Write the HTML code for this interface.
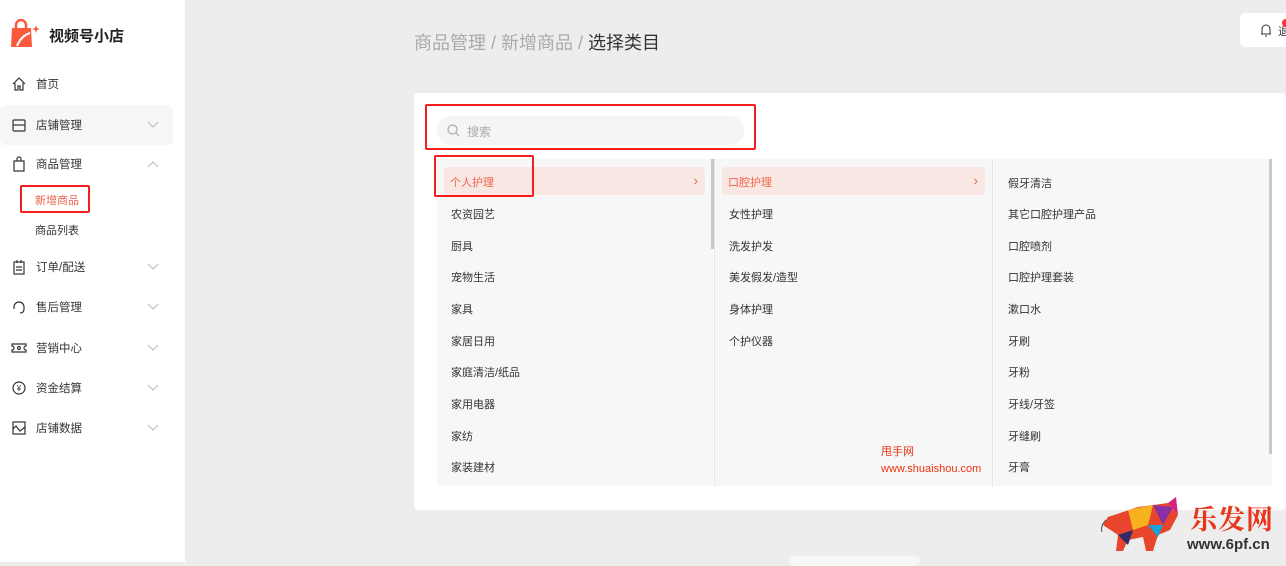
<!DOCTYPE html>
<html><head><meta charset="utf-8"><style>
*{margin:0;padding:0;box-sizing:border-box}
body{width:1286px;height:562px;overflow:hidden;background:#ededed;font-family:"Liberation Sans","Noto Sans CJK SC",sans-serif;font-size:12px;color:#333;position:relative}
.abs{position:absolute}
#side{left:0;top:0;width:185px;height:562px;background:#fff}
.mi{position:absolute;left:0;width:173px;height:40px;display:flex;align-items:center;font-size:11.5px;color:#333}
.mi svg.ic{position:absolute;left:11px}
.mi span{position:absolute;left:36px}
.mi svg.ch{position:absolute;left:147px}
.col{position:absolute;top:159px;height:327px;background:#f7f7f7}
.it{position:absolute;font-size:11px;color:#333}
.sel{position:absolute;height:28px;background:#f9e7e4;border-radius:3px;color:#f0644b}
.redbox{position:absolute;border:2px solid #f51d1d;border-radius:2px}
</style></head><body>
<div id="side" class="abs">
  <svg class="abs" style="left:9px;top:19px" width="30" height="30" viewBox="0 0 30 30"><path d="M3 9h19l1 19H2z" fill="#fa5a3c"/><path d="M7 9V6a5 5 0 0 1 10 0v3" fill="none" stroke="#fa5a3c" stroke-width="2.5"/><path d="M8 27q4-10 13-13" fill="none" stroke="#fff" stroke-width="2"/><path d="M27 6l1 3 3 1-3 1-1 3-1-3-3-1 3-1z" fill="#fa5a3c"/></svg>
  <div class="abs" style="left:49px;top:25px;font-size:15px;font-weight:bold;color:#222">视频号小店</div>
  <div class="mi" style="top:64px"><svg class="ic" width="16" height="16" viewBox="0 0 16 16" fill="none" stroke="#333" stroke-width="1.2"><path d="M2 8L8 2l6 6M4 7v7h3v-4h2v4h3V7"/></svg><span>首页</span></div>
  <div class="mi" style="top:105px;background:#f5f6f7;border-radius:6px"><svg class="ic" width="16" height="16" viewBox="0 0 16 16" fill="none" stroke="#333" stroke-width="1.2"><rect x="2" y="3" width="12" height="11" rx="1"/><path d="M2 8h12"/></svg><span>店铺管理</span><svg class="ch" width="12" height="8" viewBox="0 0 12 8" fill="none" stroke="#bbb"><path d="M1 1l5 5 5-5"/></svg></div>
  <div class="mi" style="top:144px"><svg class="ic" width="16" height="16" viewBox="0 0 16 16" fill="none" stroke="#333" stroke-width="1.2"><path d="M3 5h10v10H3zM6 5V3a2 2 0 0 1 4 0v2"/></svg><span>商品管理</span><svg class="ch" width="12" height="8" viewBox="0 0 12 8" fill="none" stroke="#bbb"><path d="M1 7l5-5 5 5"/></svg></div>
  <div class="abs" style="left:35px;top:192px;font-size:11px;color:#f0644b">新增商品</div>
  <div class="redbox" style="left:20px;top:185px;width:70px;height:28px"></div>
  <div class="abs" style="left:35px;top:222px;font-size:11px;color:#333">商品列表</div>
  <div class="mi" style="top:247px"><svg class="ic" width="16" height="16" viewBox="0 0 16 16" fill="none" stroke="#333" stroke-width="1.2"><rect x="3" y="3" width="10" height="12"/><path d="M6 1v3M10 1v3M5 8h6M5 11h6"/></svg><span>订单/配送</span><svg class="ch" width="12" height="8" viewBox="0 0 12 8" fill="none" stroke="#bbb"><path d="M1 1l5 5 5-5"/></svg></div>
  <div class="mi" style="top:287px"><svg class="ic" width="16" height="16" viewBox="0 0 16 16" fill="none" stroke="#333" stroke-width="1.2"><path d="M3 10V8a5 5 0 0 1 10 0v2M13 10q0 4-4 4"/></svg><span>售后管理</span><svg class="ch" width="12" height="8" viewBox="0 0 12 8" fill="none" stroke="#bbb"><path d="M1 1l5 5 5-5"/></svg></div>
  <div class="mi" style="top:328px"><svg class="ic" width="16" height="16" viewBox="0 0 16 16" fill="none" stroke="#333" stroke-width="1.2"><path d="M1 4h14v2a2 2 0 0 0 0 4v2H1v-2a2 2 0 0 0 0-4z"/><circle cx="8" cy="8" r="1.5"/></svg><span>营销中心</span><svg class="ch" width="12" height="8" viewBox="0 0 12 8" fill="none" stroke="#bbb"><path d="M1 1l5 5 5-5"/></svg></div>
  <div class="mi" style="top:368px"><svg class="ic" width="16" height="16" viewBox="0 0 16 16" fill="none" stroke="#333" stroke-width="1.2"><circle cx="8" cy="8" r="6"/><text x="8" y="11" font-size="8" text-anchor="middle" fill="#333" stroke="none">¥</text></svg><span>资金结算</span><svg class="ch" width="12" height="8" viewBox="0 0 12 8" fill="none" stroke="#bbb"><path d="M1 1l5 5 5-5"/></svg></div>
  <div class="mi" style="top:408px"><svg class="ic" width="16" height="16" viewBox="0 0 16 16" fill="none" stroke="#333" stroke-width="1.2"><rect x="2" y="2" width="12" height="12"/><path d="M2 9l3-3 4 5 5-4"/></svg><span>店铺数据</span><svg class="ch" width="12" height="8" viewBox="0 0 12 8" fill="none" stroke="#bbb"><path d="M1 1l5 5 5-5"/></svg></div>
</div>

<div class="abs" style="left:414px;top:29px;font-size:18px;color:#aaa">商品管理 / 新增商品 / <span style="color:#333">选择类目</span></div>
<div class="abs" style="left:1240px;top:13px;width:60px;height:34px;background:#fff;border-radius:6px"></div>
<svg class="abs" style="left:1260px;top:23px" width="12" height="14" viewBox="0 0 12 14" fill="none" stroke="#333"><path d="M2 11V6a4 4 0 0 1 8 0v5zM1 11h10M5 13h2"/></svg>
<div class="abs" style="left:1278px;top:23px;font-size:11px">退</div>
<div class="abs" style="left:1282px;top:19px;width:8px;height:8px;border-radius:50%;background:#f33"></div>

<div class="abs" style="left:414px;top:93px;width:872px;height:417px;background:#fff;border-radius:4px"></div>
<div class="abs" style="left:437px;top:116px;width:307px;height:29px;background:#f5f5f5;border-radius:15px"></div>
<svg class="abs" style="left:447px;top:124px" width="13" height="13" viewBox="0 0 13 13" fill="none" stroke="#aaa" stroke-width="1.2"><circle cx="5.5" cy="5.5" r="4.5"/><path d="M9 9l3 3"/></svg>
<div class="abs" style="left:467px;top:123px;font-size:12px;color:#aaa">搜索</div>
<div class="redbox" style="left:425px;top:104px;width:331px;height:46px"></div>

<div class="col" style="left:437px;width:276px"></div>
<div class="col" style="left:715px;width:277px"></div>
<div class="col" style="left:994px;width:278px;border-radius:0 0 4px 0"></div>
<div class="abs" style="left:711px;top:159px;width:3px;height:90px;background:#c8c8c8"></div>
<div class="abs" style="left:714px;top:159px;width:1px;height:327px;background:#e4e4e4"></div>
<div class="abs" style="left:992px;top:159px;width:1px;height:327px;background:#e4e4e4"></div>
<div class="abs" style="left:1269px;top:159px;width:3px;height:295px;background:#c8c8c8"></div>

<div class="sel" style="left:444px;top:167px;width:261px"><span class="abs" style="left:6px;top:7px;font-size:11px">个人护理</span><span class="abs" style="right:7px;top:6px;font-size:13px;line-height:15px">›</span></div>
<div class="redbox" style="left:434px;top:155px;width:100px;height:42px"></div>
<div class="sel" style="left:722px;top:167px;width:263px"><span class="abs" style="left:6px;top:7px;font-size:11px">口腔护理</span><span class="abs" style="right:7px;top:6px;font-size:13px;line-height:15px">›</span></div>

<div class="it" style="left:451px;top:206px">农资园艺</div>
<div class="it" style="left:451px;top:238px">厨具</div>
<div class="it" style="left:451px;top:269px">宠物生活</div>
<div class="it" style="left:451px;top:301px">家具</div>
<div class="it" style="left:451px;top:333px">家居日用</div>
<div class="it" style="left:451px;top:364px">家庭清洁/纸品</div>
<div class="it" style="left:451px;top:396px">家用电器</div>
<div class="it" style="left:451px;top:428px">家纺</div>
<div class="it" style="left:451px;top:459px">家装建材</div>

<div class="it" style="left:729px;top:206px">女性护理</div>
<div class="it" style="left:729px;top:238px">洗发护发</div>
<div class="it" style="left:729px;top:269px">美发假发/造型</div>
<div class="it" style="left:729px;top:301px">身体护理</div>
<div class="it" style="left:729px;top:333px">个护仪器</div>

<div class="it" style="left:1008px;top:175px">假牙清洁</div>
<div class="it" style="left:1008px;top:206px">其它口腔护理产品</div>
<div class="it" style="left:1008px;top:238px">口腔喷剂</div>
<div class="it" style="left:1008px;top:269px">口腔护理套装</div>
<div class="it" style="left:1008px;top:301px">漱口水</div>
<div class="it" style="left:1008px;top:333px">牙刷</div>
<div class="it" style="left:1008px;top:364px">牙粉</div>
<div class="it" style="left:1008px;top:396px">牙线/牙签</div>
<div class="it" style="left:1008px;top:428px">牙缝刷</div>
<div class="it" style="left:1008px;top:459px">牙膏</div>

<div class="abs" style="left:881px;top:444px;font-size:11px;color:#e31;line-height:17px">甩手网<br>www.shuaishou.com</div>

<div class="abs" style="left:789px;top:556px;width:131px;height:10px;background:#f7f7f7;border-radius:5px"></div>

<svg class="abs" style="left:1098px;top:495px" width="95" height="58" viewBox="0 0 95 58"><polygon points="10,22 40,12 70,8 80,20 72,35 60,40 55,56 48,56 45,42 30,45 25,56 18,56 20,40 5,30" fill="#e8452c"/><polygon points="30,15 55,10 50,30 35,35" fill="#f7b21f"/><polygon points="55,10 75,12 65,30" fill="#8b2fa5"/><polygon points="20,40 35,35 30,50" fill="#2e2a6b"/><polygon points="50,30 65,30 60,42" fill="#1ba3d8"/><polygon points="70,8 78,2 80,20" fill="#d4237a"/><path d="M8 25q-6 6-4 12" stroke="#555" fill="none"/></svg>
<div class="abs" style="left:1190px;top:498px;font-size:27px;font-weight:bold;color:#e8351c;font-family:'Noto Serif CJK SC',serif;letter-spacing:1px">乐发网</div>
<div class="abs" style="left:1187px;top:536px;font-size:15px;font-weight:bold;color:#333">www.6pf.cn</div>
</body></html>
